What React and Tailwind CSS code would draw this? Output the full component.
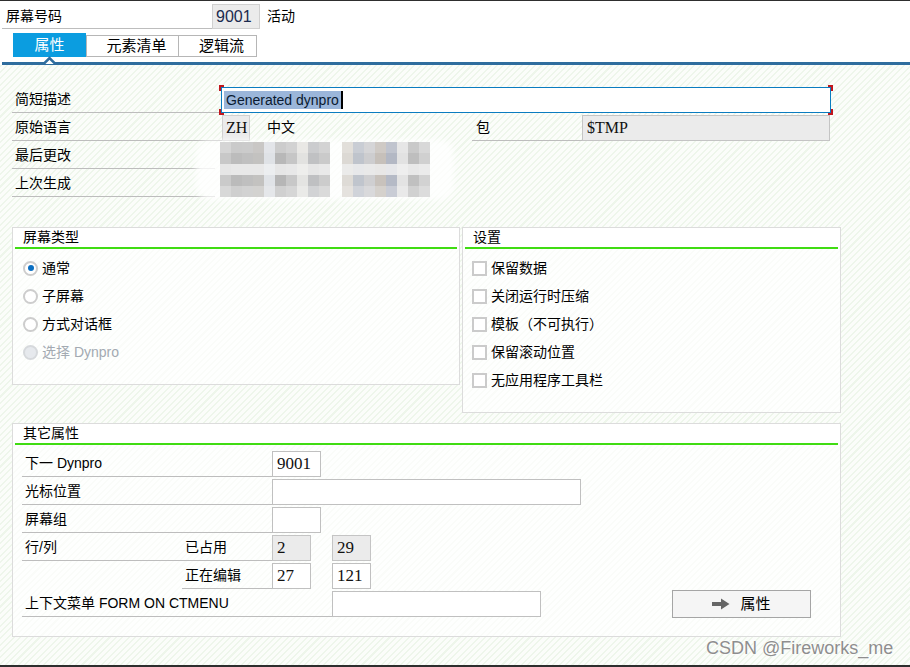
import React from 'react';

// mosaic (blurred timestamps)
const mosaicA = [
  ['bg-[#d5d5d5]', 'bg-[#cacaca]', 'bg-[#cbcbcb]', 'bg-[#c9c7c5]', 'bg-[#e3e5e9]', 'bg-[#cccccc]', 'bg-[#d2d2d2]', 'bg-[#e9e8e5]', 'bg-[#cbccce]', 'bg-[#d3d3d3]'],
  ['bg-[#c8c8c8]', 'bg-[#bcbcbc]', 'bg-[#c0c0c0]', 'bg-[#c3c2c0]', 'bg-[#dfe2e6]', 'bg-[#b8b8b8]', 'bg-[#c6c6c6]', 'bg-[#e2e2e0]', 'bg-[#c0c1c3]', 'bg-[#cacaca]'],
  ['bg-[#e6e6e6]', 'bg-[#e8e8e8]', 'bg-[#e8e8e8]', 'bg-[#e8e8e8]', 'bg-[#eceef0]', 'bg-[#e6e6e6]', 'bg-[#e8e8e8]', 'bg-[#eeeeec]', 'bg-[#e6e6e6]', 'bg-[#e9e9e9]'],
  ['bg-[#cacaca]', 'bg-[#bbbbbb]', 'bg-[#bfbfbf]', 'bg-[#c3c2c0]', 'bg-[#e0e3e7]', 'bg-[#b6b6b6]', 'bg-[#c8c8c8]', 'bg-[#e4e4e2]', 'bg-[#bfc0c2]', 'bg-[#cccccc]'],
  ['bg-[#d8d8d8]', 'bg-[#cfcfcf]', 'bg-[#d2d2d2]', 'bg-[#d3d2d0]', 'bg-[#e5e7ea]', 'bg-[#d0d0d0]', 'bg-[#d6d6d6]', 'bg-[#eaeae8]', 'bg-[#d2d3d5]', 'bg-[#dadada]'],
];

const mosaicB = [
  ['bg-[#e2dfda]', 'bg-[#c9cdd4]', 'bg-[#d5d5d7]', 'bg-[#cfcac5]', 'bg-[#c0c4ce]', 'bg-[#e6e6e6]', 'bg-[#c9c9c9]', 'bg-[#d8d8d8]'],
  ['bg-[#dcd9d4]', 'bg-[#bfc4cc]', 'bg-[#cdcdcf]', 'bg-[#c6c0ba]', 'bg-[#b3b8c4]', 'bg-[#e2e2e2]', 'bg-[#bebebe]', 'bg-[#d0d0d0]'],
  ['bg-[#ebebea]', 'bg-[#e7e8ea]', 'bg-[#e9e9e9]', 'bg-[#e8e7e6]', 'bg-[#e6e7ea]', 'bg-[#eeeeee]', 'bg-[#e8e8e8]', 'bg-[#ebebeb]'],
  ['bg-[#dedbd6]', 'bg-[#c0c5cd]', 'bg-[#cfcfd1]', 'bg-[#c8c2bc]', 'bg-[#b5bac6]', 'bg-[#e3e3e3]', 'bg-[#c0c0c0]', 'bg-[#d2d2d2]'],
  ['bg-[#e5e2de]', 'bg-[#d0d3d9]', 'bg-[#d9d9db]', 'bg-[#d5d1cc]', 'bg-[#c9ccd5]', 'bg-[#e9e9e9]', 'bg-[#d1d1d1]', 'bg-[#dcdcdc]'],
];

const Mosaic = ({ rows }) => (
  <div className="flex flex-col">
    {rows.map((row, i) => (
      <div key={i} className="flex">
        {row.map((c, j) => <div key={j} className={`w-[11px] h-[11px] ${c}`} />)}
      </div>
    ))}
  </div>
);

const Field = ({ w, gray, children }) => (
  <div className={`${w} h-[26px] border ${gray ? 'border-[#c4c4c4] bg-[#ebebeb]' : 'border-[#c0c0c0] bg-white'} pl-[4px] font-['Liberation_Serif',serif] text-[17px] leading-[24px] text-[#111]`}>
    {children}
  </div>
);

const Label = ({ w, children }) => (
  <div className={`${w} h-[26px] border-b border-[#bdbdbd] pl-[3px] leading-[25px] shrink-0`}>{children}</div>
);

const Radio = ({ checked, disabled, label }) => (
  <div className="h-[28px] flex items-center">
    <span className={`w-[15px] h-[15px] rounded-full border-2 flex items-center justify-center ${disabled ? 'border-[#d6d9dc] bg-[#e6e9ed]' : 'border-[#cdcdcd] bg-white'}`}>
      {checked && <span className="w-[6px] h-[6px] rounded-full bg-[#0a6fc2]" />}
    </span>
    <span className={`ml-[4px] ${disabled ? 'text-[#a3aab2]' : 'text-black'}`}>{label}</span>
  </div>
);

const Check = ({ label }) => (
  <div className="h-[28px] flex items-center">
    <span className="w-[15px] h-[15px] border-2 border-[#cbcbcb] bg-white" />
    <span className="ml-[4px]">{label}</span>
  </div>
);

const GroupTitle = ({ children }) => (
  <>
    <div className="h-[19px] bg-white pl-[10px] leading-[19px]">{children}</div>
    <div className="h-[2px] mx-[2px] bg-[#40dc12]" />
  </>
);

const App = () => {
  return (
    <div className="w-[910px] h-[667px] overflow-hidden flex flex-col border-t border-b-2 border-[#2e2e2e] font-['Liberation_Sans','Noto_Sans_CJK_SC',sans-serif] text-[14px] text-black relative">
      {/* Header */}
      <div className="bg-white relative">
        <div className="flex items-start pl-[2px] pt-[3px]">
          <div className="w-[210px] h-[25px] border-b border-[#bdbdbd] pl-[4px] leading-[24px]">屏幕号码</div>
          <div className="w-[48px] h-[25px] border border-[#d0d0d0] bg-[#ebebeb] pl-[3px] text-[16px] leading-[23px] text-[#1b2a4e]">9001</div>
          <div className="ml-[7px] leading-[24px]">活动</div>
        </div>

        {/* Tabs */}
        <div className="flex items-end pl-[13px] mt-[4px] text-[15px]">
          <div className="w-[73px] h-[24px] bg-[#0b9de0] text-white flex items-center justify-center">属性</div>
          <div className="w-[93px] h-[22px] border border-[#b6b6b6] bg-white flex items-center justify-center pl-[8px]">元素清单</div>
          <div className="w-[78px] h-[22px] border border-l-0 border-[#b6b6b6] bg-white flex items-center justify-center pl-[8px]">逻辑流</div>
        </div>
        <div className="h-[3px] ml-[2px] mt-[5px] bg-[#2f6d9e]" />
        <svg className="absolute left-[43px] top-[55px]" width="13" height="9" viewBox="0 0 13 9">
          <polyline points="0.5,8 6.5,2 12.5,8" fill="white" stroke="#2f6d9e" strokeWidth="2.5" />
        </svg>
      </div>

      {/* Main */}
      <div className="flex-1 relative pl-[12px] bg-[repeating-linear-gradient(135deg,#eef6eb_0px,#eef6eb_1.5px,#fbfdfa_1.5px,#fbfdfa_4.5px)]">
        {/* Header attributes */}
        <div className="flex flex-col gap-[2px] mt-[22px]">
          <div className="flex h-[26px]">
            <Label w="w-[209px]">简短描述</Label>
            <div className="w-[610px] h-[26px] border border-[#0b7cc0] bg-white pl-[2px] flex items-center relative">
              <span className="inline-block h-[18px] px-[2px] bg-[#9bb6da] text-[#0a1a30] leading-[18px] text-[14px]">Generated dynpro</span>
              <span className="w-[2px] h-[18px] bg-black" />
              <span className="absolute left-[-3px] top-[-3px] w-[5px] h-[6px] border-l-2 border-t-2 border-[#c0171d]" />
              <span className="absolute left-[-3px] bottom-[-3px] w-[5px] h-[6px] border-l-2 border-b-2 border-[#c0171d]" />
              <span className="absolute right-[-3px] top-[-3px] w-[5px] h-[6px] border-r-2 border-t-2 border-[#c0171d]" />
              <span className="absolute right-[-3px] bottom-[-3px] w-[5px] h-[6px] border-r-2 border-b-2 border-[#c0171d]" />
            </div>
          </div>
          <div className="flex h-[26px]">
            <Label w="w-[210px]">原始语言</Label>
            <div className="w-[28px] h-[26px] border border-[#d0d0d0] bg-[#ebebeb] pl-[3px] font-['Liberation_Serif',serif] text-[16px] leading-[24px] text-[#111]">ZH</div>
            <div className="w-[222px] pl-[17px] leading-[25px]">中文</div>
            <div className="w-[110px] h-[26px] border-b border-[#bdbdbd] pl-[4px] leading-[25px]">包</div>
            <div className="w-[248px] h-[26px] border border-[#c4c4c4] bg-[#ebebeb] pl-[4px] font-['Liberation_Serif',serif] text-[16px] leading-[24px] text-[#111]">$TMP</div>
          </div>
          <div className="flex h-[26px]">
            <Label w="w-[203px]">最后更改</Label>
          </div>
          <div className="flex h-[26px]">
            <Label w="w-[203px]">上次生成</Label>
          </div>
        </div>

        {/* blurred timestamps */}
        <div className="absolute left-[196px] top-[75px] w-[258px] h-[60px] rounded-[14px] bg-white/80 blur-[3px]" />
        <div className="absolute left-[220px] top-[77px] flex gap-[12px]">
          <Mosaic rows={mosaicA} />
          <Mosaic rows={mosaicB} />
        </div>

        {/* Screen type / settings */}
        <div className="flex items-start gap-[2px] mt-[30px]">
          <div className="w-[448px] h-[158px] border border-[#dcdcdc] bg-white/70">
            <GroupTitle>屏幕类型</GroupTitle>
            <div className="pl-[10px] mt-[5px]">
              <Radio checked label="通常" />
              <Radio label="子屏幕" />
              <Radio label="方式对话框" />
              <Radio disabled label="选择 Dynpro" />
            </div>
          </div>
          <div className="w-[379px] h-[186px] border border-[#dcdcdc] bg-white/70">
            <GroupTitle>设置</GroupTitle>
            <div className="pl-[9px] mt-[5px]">
              <Check label="保留数据" />
              <Check label="关闭运行时压缩" />
              <Check label="模板（不可执行）" />
              <Check label="保留滚动位置" />
              <Check label="无应用程序工具栏" />
            </div>
          </div>
        </div>

        {/* Other attributes */}
        <div className="w-[829px] h-[214px] mt-[10px] border border-[#dcdcdc] bg-white/70">
          <GroupTitle>其它属性</GroupTitle>
          <div className="pl-[9px] mt-[6px] flex flex-col gap-[2px]">
            <div className="flex h-[26px]">
              <Label w="w-[250px]">下一 Dynpro</Label>
              <Field w="w-[49px]">9001</Field>
            </div>
            <div className="flex h-[26px]">
              <Label w="w-[250px]">光标位置</Label>
              <Field w="w-[309px]" />
            </div>
            <div className="flex h-[26px]">
              <Label w="w-[250px]">屏幕组</Label>
              <Field w="w-[49px]" />
            </div>
            <div className="flex h-[26px]">
              <Label w="w-[160px]">行/列</Label>
              <Label w="w-[90px]">已占用</Label>
              <Field w="w-[39px]" gray>2</Field>
              <div className="w-[21px]" />
              <Field w="w-[39px]" gray>29</Field>
            </div>
            <div className="flex h-[26px] pl-[160px]">
              <Label w="w-[90px]">正在编辑</Label>
              <Field w="w-[39px]">27</Field>
              <div className="w-[21px]" />
              <Field w="w-[39px]">121</Field>
            </div>
            <div className="flex h-[26px] items-center">
              <Label w="w-[310px]">上下文菜单 FORM ON CTMENU</Label>
              <Field w="w-[209px]" />
              <button className="ml-[131px] w-[139px] h-[28px] border border-[#a5a5a5] bg-[#f5f5f5] flex items-center justify-center gap-[10px] text-[15px]">
                <svg width="18" height="12" viewBox="0 0 18 12">
                  <path d="M0 4h9V0.5l8.5 5.5L9 11.5V8H0z" fill="#666" />
                </svg>
                <span>属性</span>
              </button>
            </div>
          </div>
        </div>

        {/* watermark */}
        <div className="absolute left-[706px] top-[570px] text-[18px] text-[#8e8e8e] [text-shadow:0_0_2px_#fff,0_0_2px_#fff]">CSDN @Fireworks_me</div>
      </div>
    </div>
  );
};

export default App;
